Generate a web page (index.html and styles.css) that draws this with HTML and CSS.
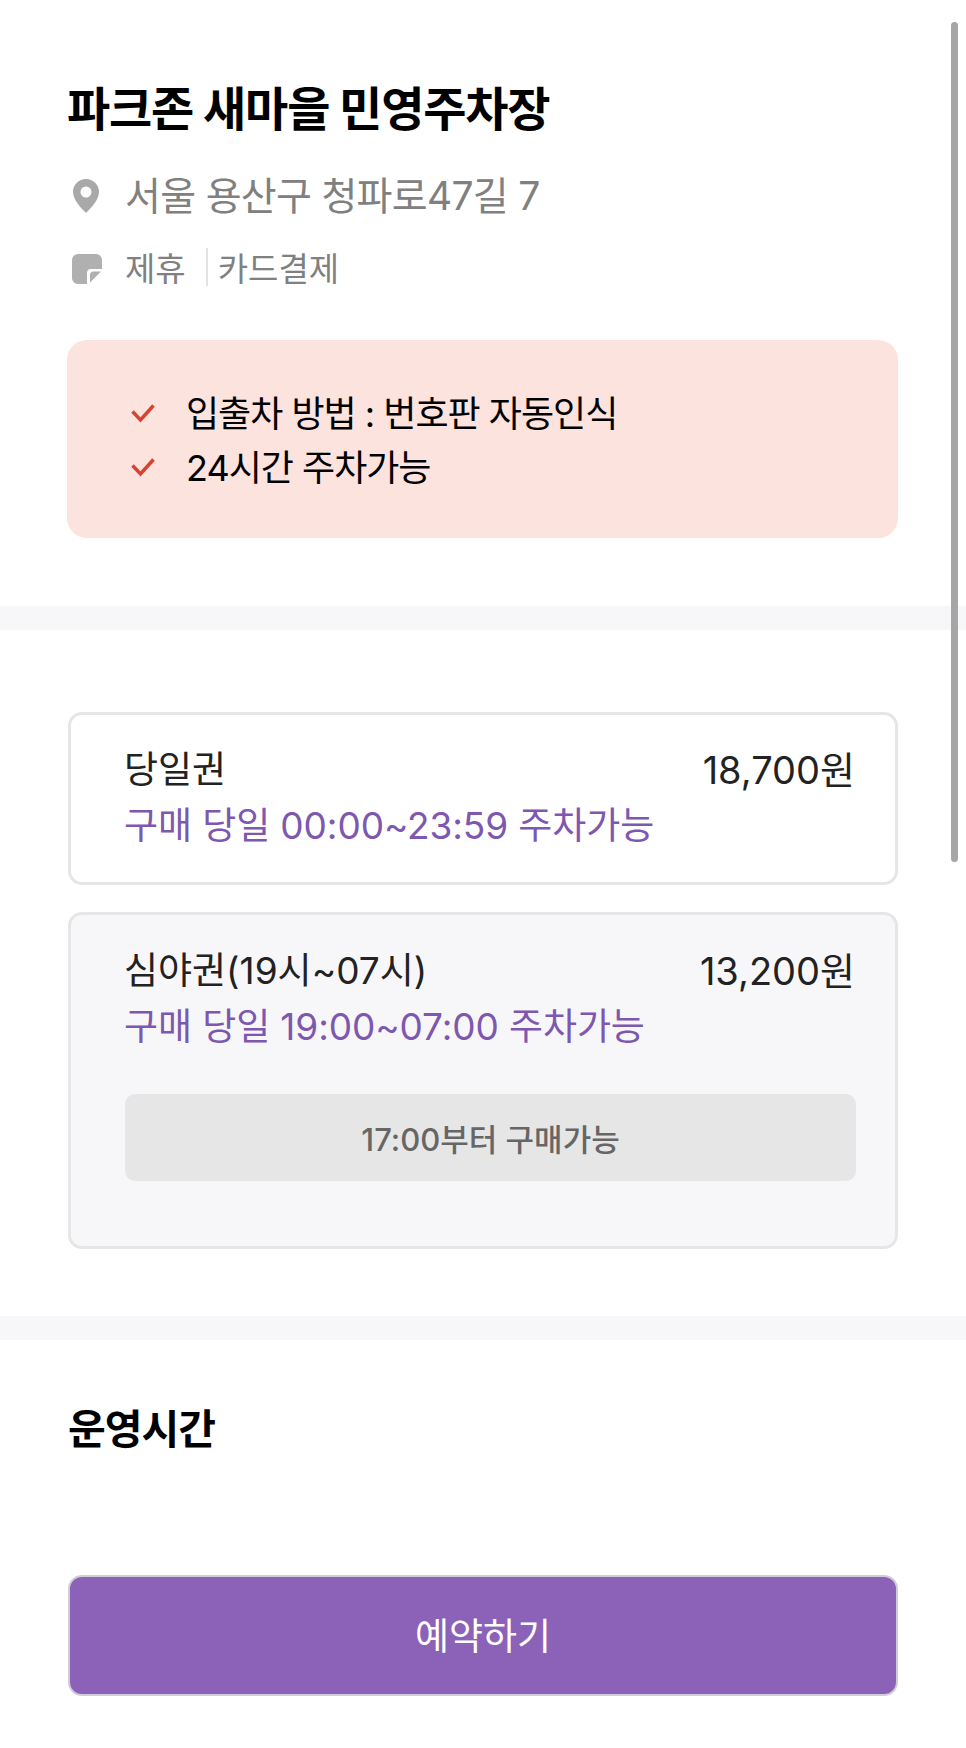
FILE: index.html
```html
<!DOCTYPE html>
<html lang="ko">
<head>
<meta charset="utf-8">
<title>파크존 새마을 민영주차장</title>
<link rel="stylesheet" href="styles.css">
</head>
<body>
<div class="page">
  <section class="head">
    <h1 class="title">파크존 새마을 민영주차장</h1>
    <div class="addr">
      <svg class="ico" viewBox="0 0 28 36" width="28" height="36"><path fill="#a9a9a9" fill-rule="evenodd" d="M14 1C6.8 1 1 6.7 1 13.800 1 22 9.500 30.500 14 35c4.500-4.500 13-13 13-21.200C27 6.700 21.200 1 14 1zm0 7.500a5.500 5.500 0 1 1 0 11 5.500 5.500 0 0 1 0-11z"/></svg>
      <span>서울 용산구 청파로47길 7</span>
    </div>
    <div class="tags">
      <svg class="ico" viewBox="0 0 30 30" width="30" height="30"><path fill="#b0b0b0" d="M6 0h18a6 6 0 0 1 6 6v9H19a4 4 0 0 0-4 4v11H6a6 6 0 0 1-6-6V6a6 6 0 0 1 6-6z"/><path fill="#b0b0b0" d="M18 28.500V21a3.500 3.500 0 0 1 3.500-3.500H29z"/></svg>
      <span class="tag">제휴</span><span class="tag-sep"></span><span class="tag tag-b">카드결제</span>
    </div>
    <div class="notice">
      <div class="notice-row">
        <svg class="check" viewBox="0 0 24 20" width="24" height="20"><path fill="none" stroke="#d8432f" stroke-width="3.500" d="M1.500 8.500l8 8.500L22.500 2.500"/></svg>
        <span>입출차 방법 : 번호판 자동인식</span>
      </div>
      <div class="notice-row">
        <svg class="check" viewBox="0 0 24 20" width="24" height="20"><path fill="none" stroke="#d8432f" stroke-width="3.500" d="M1.500 8.500l8 8.500L22.500 2.500"/></svg>
        <span>24시간 주차가능</span>
      </div>
    </div>
  </section>
  <div class="band"></div>
  <section class="tickets">
    <div class="ticket">
      <div class="t-row"><span>당일권</span><span>18,700원</span></div>
      <div class="t-desc">구매 당일 00:00~23:59 주차가능</div>
    </div>
    <div class="ticket ticket-off">
      <div class="t-row"><span>심야권(19시~07시)</span><span>13,200원</span></div>
      <div class="t-desc">구매 당일 19:00~07:00 주차가능</div>
      <div class="t-btn">17:00부터 구매가능</div>
    </div>
  </section>
  <div class="band"></div>
  <section class="hours">
    <h2 class="hours-title">운영시간</h2>
    <button class="reserve" type="button">예약하기</button>
  </section>
  <div class="scrollbar"></div>
</div>
</body>
</html>
```
FILE: styles.css
```css
* { box-sizing: border-box; }
html, body { margin: 0; padding: 0; background: #fff; }
body { font-family: "Inter", "Noto Sans CJK KR", sans-serif; color: #000; }
.page { position: relative; width: 966px; height: 1748px; overflow: hidden; background: #fff; }
.head { height: 606px; padding: 78px 68px 0 67px; }
.title { margin: 0; font-size: 47px; line-height: 62px; font-weight: 700; letter-spacing: -1.2px; height: 62px; white-space: nowrap; }
.addr { display: flex; align-items: center; margin-top: 29px; height: 48px; color: #808080; font-size: 39px; letter-spacing: -0.7px; white-space: nowrap; }
.addr .ico { margin: 6px 25px 0 5px; flex: none; }
.tags { display: flex; align-items: center; margin-top: 30px; height: 40px; color: #808080; font-size: 33px; white-space: nowrap; }
.tags .ico { margin: 3px 23px 0 5px; flex: none; }
.tag-sep { width: 2px; height: 38px; background: #e3e3e3; margin: 0 10px 0 20px; }
.notice { margin-top: 53px; width: 831px; height: 198px; background: #fce3de; border-radius: 20px; padding: 44px 0 0 64px; }
.notice-row { display: flex; align-items: center; height: 54px; font-size: 36px; letter-spacing: -1px; white-space: nowrap; }
.check { flex: none; margin: 4px 31px 0 0; }
.band { height: 24px; background: #f7f7fa; }
.tickets { height: 686px; padding: 82px 68px 0; display: flex; flex-direction: column; gap: 27px; }
.ticket { border: 3px solid #e6e6e6; border-radius: 14px; padding: 28px 40px 0 53px; height: 173px; background: #fff; }
.ticket-off { background: #f7f7fa; height: 337px; padding-top: 29px; }
.t-row { display: flex; justify-content: space-between; font-size: 37px; line-height: 54px; color: #222; white-space: nowrap; }
.t-row span:last-child { font-size: 38px; }
.t-desc { margin-top: 2px; font-size: 37px; line-height: 54px; color: #7d57b0; letter-spacing: -0.1px; white-space: nowrap; }
.t-btn { margin-top: 40px; margin-right: -1px; margin-left: 1px; height: 87px; background: #e6e6e6; border-radius: 10px; display: flex; align-items: center; justify-content: center; font-size: 31px; font-weight: 500; color: #666; }
.hours { padding: 0 68px; }
.hours-title { margin: 61px 0 0; height: 56px; line-height: 56px; font-size: 41px; font-weight: 700; letter-spacing: -1px; }
.reserve { display: block; margin-top: 118px; padding: 0 0 4px; width: 830px; height: 121px; background: #8c62b8; border: 2px solid #d0ccd8; border-radius: 14px; color: #fff; font-family: inherit; font-size: 37px; }
.scrollbar { position: absolute; left: 951px; top: 22px; width: 7px; height: 840px; background: #a6a6a6; border-radius: 4px; }
```
